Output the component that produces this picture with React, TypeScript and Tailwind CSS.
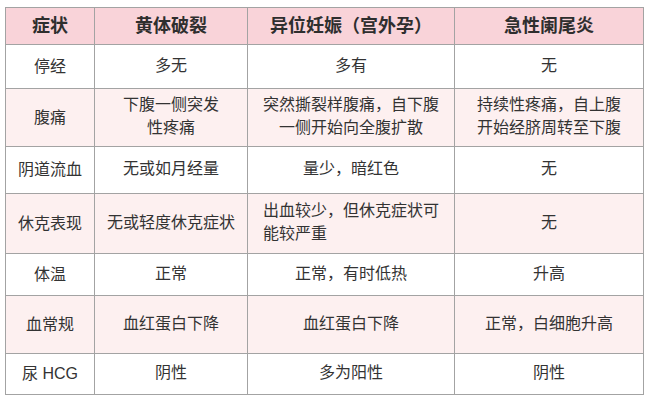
const FONT = "font-['Liberation_Sans','Noto_Sans_CJK_SC',sans-serif]"

type Row = { label: string; cells: React.ReactNode[]; pink?: boolean }

const rows: Row[] = [
  { label: "停经", cells: ["多无", "多有", "无"] },
  {
    label: "腹痛",
    pink: true,
    cells: [
      <>下腹一侧突发<br />性疼痛</>,
      <>突然撕裂样腹痛，自下腹<br />一侧开始向全腹扩散</>,
      <>持续性疼痛，自上腹<br />开始经脐周转至下腹</>,
    ],
  },
  { label: "阴道流血", cells: ["无或如月经量", "量少，暗红色", "无"] },
  {
    label: "休克表现",
    pink: true,
    cells: [
      "无或轻度休克症状",
      <span className="block text-left">出血较少，但休克症状可<br />能较严重</span>,
      "无",
    ],
  },
  { label: "体温", cells: ["正常", "正常，有时低热", "升高"] },
  { label: "血常规", pink: true, cells: ["血红蛋白下降", "血红蛋白下降", "正常，白细胞升高"] },
  { label: "尿 HCG", cells: ["阴性", "多为阳性", "阴性"] },
]

const headers = ["症状", "黄体破裂", "异位妊娠（宫外孕）", "急性阑尾炎"]

export default function App() {
  return (
    <div className={`w-[648px] h-[400px] bg-white pt-[7px] pl-[5px] ${FONT}`}>
      <div className="grid w-[639px] grid-cols-[88px_152px_206px_188px] grid-rows-[36px_43px_57px_46px_59px_41px_57px_40px] gap-px bg-[#a3a3a3] p-px">
        {headers.map((h) => (
          <div
            key={h}
            className="flex items-center justify-center bg-[#f9d3d9] text-[18px] font-bold text-[#2e2e2e] leading-none"
          >
            {h}
          </div>
        ))}
        {rows.map((r) => (
          <Cells key={r.label} row={r} />
        ))}
      </div>
    </div>
  )
}

function Cells({ row }: { row: Row }) {
  const bg = row.pink ? "bg-[#fdf0f0]" : "bg-white"
  return (
    <>
      <div className={`flex items-center justify-center ${bg} text-[16px] text-[#333]`}>
        {row.label}
      </div>
      {row.cells.map((c, i) => (
        <div
          key={i}
          className={`flex items-center justify-center ${bg} text-center text-[16px] leading-[23px] text-[#333]`}
        >
          <div className="-mt-[3px]">{c}</div>
        </div>
      ))}
    </>
  )
}
